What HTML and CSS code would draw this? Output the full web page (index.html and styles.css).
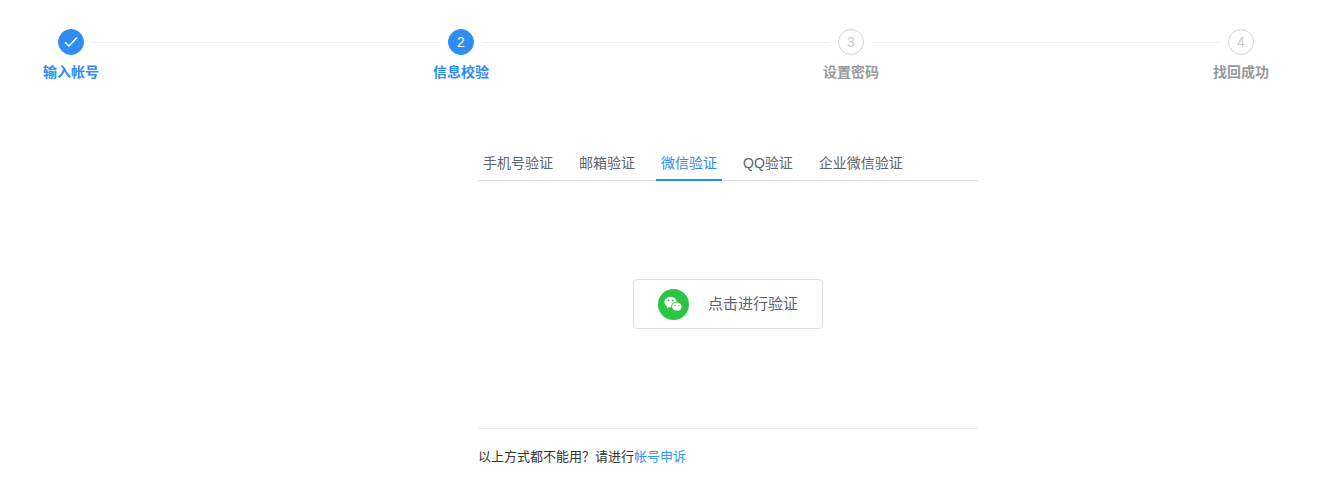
FILE: index.html
```html
<!DOCTYPE html>
<html lang="zh-CN">
<head>
<meta charset="utf-8">
<title>找回密码</title>
<link rel="stylesheet" href="styles.css">
</head>
<body>
<div class="steps">
  <div class="step done">
    <div class="step-head">
      <span class="step-icon"><svg width="14" height="12" viewBox="0 0 14 12"><path d="M1 6.2 5 10 13 1.6" fill="none" stroke="#fff" stroke-width="1.5"/></svg></span>
      <span class="step-line"></span>
    </div>
    <div class="step-label">输入帐号</div>
  </div>
  <div class="step done">
    <div class="step-head">
      <span class="step-icon">2</span>
      <span class="step-line"></span>
    </div>
    <div class="step-label">信息校验</div>
  </div>
  <div class="step">
    <div class="step-head">
      <span class="step-icon">3</span>
      <span class="step-line"></span>
    </div>
    <div class="step-label">设置密码</div>
  </div>
  <div class="step last">
    <div class="step-head">
      <span class="step-icon">4</span>
    </div>
    <div class="step-label">找回成功</div>
  </div>
</div>

<main class="panel">
  <nav class="tabs">
    <a class="tab">手机号验证</a>
    <a class="tab">邮箱验证</a>
    <a class="tab active">微信验证</a>
    <a class="tab">QQ验证</a>
    <a class="tab">企业微信验证</a>
  </nav>
  <div class="verify">
    <button class="verify-btn" type="button">
      <span class="wx-icon">
        <svg width="31" height="31" viewBox="0 0 31 31">
          <circle cx="15.5" cy="15.5" r="15.5" fill="#2bc544"/>
          <ellipse cx="12.6" cy="13" rx="6.2" ry="5.2" fill="#fff"/>
          <path d="M9.2 16.4 8.8 19.4 12 17.6Z" fill="#fff"/>
          <ellipse cx="18.8" cy="17.6" rx="5.7" ry="4.8" fill="#2bc544"/>
          <ellipse cx="18.8" cy="17.6" rx="4.9" ry="4" fill="#fff"/>
          <path d="M20.8 20.4 22.4 22.6 22 19.8Z" fill="#fff"/>
          <circle cx="10.6" cy="11.4" r=".9" fill="#2bc544"/>
          <circle cx="14.6" cy="11.4" r=".9" fill="#2bc544"/>
          <circle cx="17" cy="16.6" r=".7" fill="#2bc544"/>
          <circle cx="20.6" cy="16.6" r=".7" fill="#2bc544"/>
        </svg>
      </span>
      <span class="verify-text">点击进行验证</span>
    </button>
  </div>
  <footer class="foot">以上方式都不能用？请进行<a class="foot-link">帐号申诉</a></footer>
</main>
</body>
</html>
```
FILE: styles.css
```css
* {
  box-sizing: border-box;
}

html,
body {
  margin: 0;
  background: #fff;
}

body {
  font-family: "Liberation Sans", "Noto Sans CJK SC", sans-serif;
  font-size: 14px;
  color: #5c6370;
  height: 486px;
  overflow: hidden;
}

.steps {
  display: flex;
  padding: 29px 0 0 58px;
}

.step {
  width: 390px;
}

.step.last {
  width: 26px;
}

.step-head {
  display: flex;
  align-items: center;
  height: 26px;
}

.step-icon {
  flex: none;
  width: 26px;
  height: 26px;
  display: flex;
  align-items: center;
  justify-content: center;
  border: 1px solid #d4d4d4;
  border-radius: 50%;
  font-size: 14px;
  color: #c9c9c9;
}

.done .step-icon {
  background: #2f8cf2;
  border-color: #2f8cf2;
  color: #fff;
}

.step-line {
  flex: 1;
  height: 1px;
  margin: 0 8px;
  background: #eee;
}

.step-label {
  width: 56px;
  margin: 7px 0 0 -15px;
  font-size: 14px;
  line-height: 20px;
  font-weight: 700;
  white-space: nowrap;
  color: #999;
}

.done .step-label {
  color: #2f8cf2;
}

.panel {
  width: 500px;
  margin: 69px 0 0 478px;
}

.tabs {
  display: flex;
  gap: 16px;
  height: 30px;
  border-bottom: 1px solid #dcdfe3;
}

.tab {
  height: 30px;
  padding: 0 5px;
  line-height: 24px;
  color: #5c6370;
  white-space: nowrap;
}

.tab.active {
  color: #2f8cf2;
  border-bottom: 2px solid #2f8cf2;
}

.verify {
  height: 248px;
  padding: 98px 0 0 155px;
  border-bottom: 1px solid #eee;
}

.verify-btn {
  display: flex;
  align-items: center;
  gap: 19px;
  width: 190px;
  height: 50px;
  padding: 0 0 0 24px;
  background: #fff;
  border: 1px solid #dcdfe3;
  border-radius: 4px;
  font: inherit;
  font-size: 15px;
  color: #5c6370;
}

.wx-icon {
  display: flex;
  flex: none;
}

.verify-text {
  line-height: 20px;
}

.foot {
  margin-top: 18px;
  font-size: 13px;
  line-height: 20px;
  color: #333;
  white-space: nowrap;
}

.foot-link {
  color: #2f9bf2;
}
```
